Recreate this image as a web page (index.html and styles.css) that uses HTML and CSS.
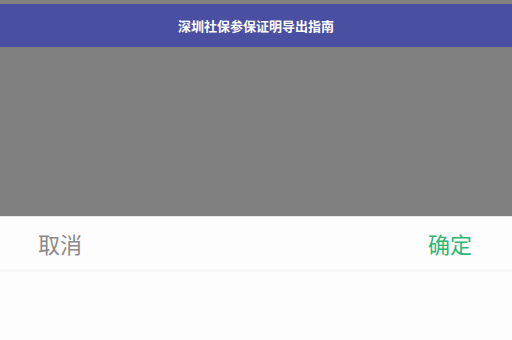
FILE: index.html
```html
<!DOCTYPE html>
<html lang="zh-CN">
<head>
    <meta charset="UTF-8">
    <meta name="viewport" content="width=device-width, initial-scale=1.0">
    <title>深圳社保参保证明导出指南</title>
    <link rel="stylesheet" href="styles.css">
</head>
<body>
    <div class="top-strip"></div>
    <header class="title-bar">
        <h1>深圳社保参保证明导出指南</h1>
    </header>
    <div class="mask"></div>
    <div class="sheet">
        <div class="sheet-actions">
            <button type="button" class="btn-cancel">取消</button>
            <button type="button" class="btn-ok">确定</button>
        </div>
        <div class="sheet-body"></div>
    </div>
</body>
</html>
```

FILE: styles.css
```css
body {
    font-family: "Noto Sans CJK SC", "Noto Sans", sans-serif;
    background-color: #fdfdfd;
    margin: 0;
    padding: 0;
    width: 512px;
    height: 340px;
    overflow: hidden;
}
.top-strip {
    height: 4px;
    background-color: #808080;
}
.title-bar {
    height: 43px;
    background-color: #4a4fa1;
    display: flex;
    justify-content: center;
    align-items: center;
}
h1 {
    margin: 0;
    font-size: 13px;
    font-weight: bold;
    color: #fff;
}
.mask {
    height: 169px;
    background-color: #808080;
}
.sheet {
    background-color: #fdfdfd;
    border-top: 1px solid #e4e4e4;
}
.sheet-actions {
    height: 52px;
    display: flex;
    justify-content: space-between;
    align-items: center;
    padding: 0 40px 0 38px;
    border-bottom: 3px solid #f7f7f7;
}
button {
    font-family: "Noto Sans CJK SC", sans-serif;
    font-size: 22px;
    background: none;
    border: none;
    padding: 0;
    cursor: pointer;
}
.btn-cancel {
    color: #8a8a8a;
}
.btn-ok {
    color: #2fb673;
}
.sheet-body {
    height: 80px;
}
```
